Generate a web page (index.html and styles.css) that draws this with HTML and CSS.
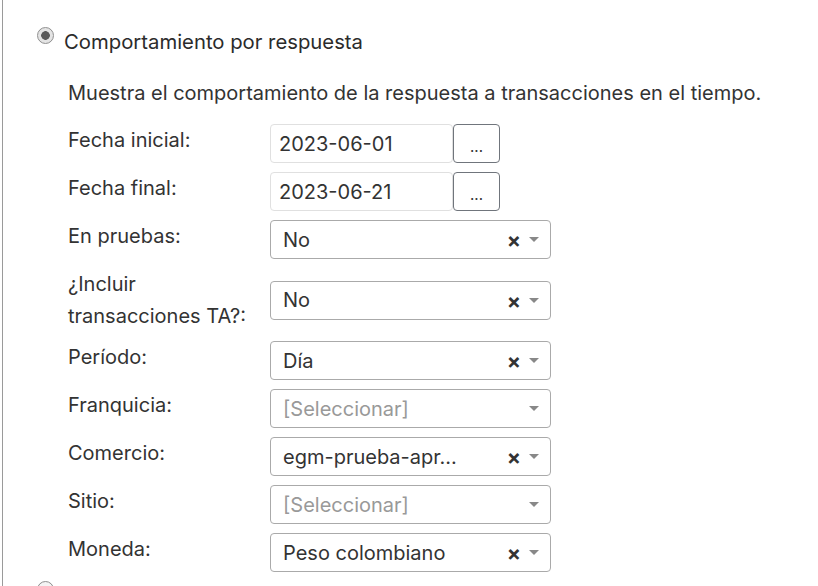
FILE: index.html
```html
<!DOCTYPE html>
<html lang="es">
<head>
<meta charset="utf-8">
<title>Comportamiento por respuesta</title>
<link rel="stylesheet" href="styles.css">
</head>
<body>
<div class="panel">
  <div class="option">
    <span class="radio checked"></span>
    <span class="option-title">Comportamiento por respuesta</span>
  </div>
  <div class="option-body">
    <p class="desc">Muestra el comportamiento de la respuesta a transacciones en el tiempo.</p>
    <div class="form">
      <div class="row">
        <label class="lbl">Fecha inicial:</label>
        <div class="date"><div class="date-input">2023-06-01</div><button class="dots">...</button></div>
      </div>
      <div class="row">
        <label class="lbl">Fecha final:</label>
        <div class="date"><div class="date-input">2023-06-21</div><button class="dots">...</button></div>
      </div>
      <div class="row">
        <label class="lbl">En pruebas:</label>
        <div class="select"><span class="val">No</span><span class="clear">×</span><span class="arrow"></span></div>
      </div>
      <div class="row tall">
        <label class="lbl">¿Incluir<br>transacciones TA?:</label>
        <div class="select"><span class="val">No</span><span class="clear">×</span><span class="arrow"></span></div>
      </div>
      <div class="row">
        <label class="lbl">Período:</label>
        <div class="select"><span class="val">Día</span><span class="clear">×</span><span class="arrow"></span></div>
      </div>
      <div class="row">
        <label class="lbl">Franquicia:</label>
        <div class="select"><span class="val placeholder">[Seleccionar]</span><span class="arrow"></span></div>
      </div>
      <div class="row">
        <label class="lbl">Comercio:</label>
        <div class="select"><span class="val">egm-prueba-apr...</span><span class="clear">×</span><span class="arrow"></span></div>
      </div>
      <div class="row">
        <label class="lbl">Sitio:</label>
        <div class="select"><span class="val placeholder">[Seleccionar]</span><span class="arrow"></span></div>
      </div>
      <div class="row">
        <label class="lbl">Moneda:</label>
        <div class="select"><span class="val">Peso colombiano</span><span class="clear">×</span><span class="arrow"></span></div>
      </div>
    </div>
  </div>
  <div class="option">
    <span class="radio"></span>
  </div>
</div>
</body>
</html>
```

FILE: styles.css
```css
html, body {
  margin: 0;
  padding: 0;
  background: #ffffff;
}

body {
  font-family: Inter, "Noto Sans", sans-serif;
  color: #333333;
  overflow: hidden;
}

.panel {
  margin-left: 2px;
  border-left: 1px solid #9a9a9a;
  min-height: 586px;
  padding: 27px 0 0 34px;
  box-sizing: border-box;
}

.option {
  display: flex;
  align-items: flex-start;
}

.radio {
  width: 17px;
  height: 17px;
  border-radius: 50%;
  box-sizing: border-box;
  border: 1.5px solid #8f8f8f;
  background: #f4f4f4;
  flex: none;
}

.radio.checked {
  background: radial-gradient(circle, #5a5a5a 0 4px, #e4e4e4 4.6px);
}

.option-title {
  margin-left: 10px;
  margin-top: 3px;
  font-size: 20.3px;
  line-height: 24px;
  color: #2b2b2b;
}

.option-body {
  padding-left: 31px;
}

.desc {
  margin: 27px 0 19px 0;
  font-size: 20px;
  line-height: 24px;
}

.form {
  display: flex;
  flex-direction: column;
}

.row {
  display: flex;
  align-items: flex-start;
  margin-bottom: 9px;
}

.row.tall {
  align-items: center;
}

.lbl {
  width: 202px;
  flex: none;
  font-size: 20px;
  line-height: 32px;
}

.date {
  display: flex;
}

.date-input {
  width: 183px;
  height: 39px;
  box-sizing: border-box;
  border: 1px solid #e0e0e0;
  border-radius: 4px;
  padding-left: 8px;
  display: flex;
  align-items: center;
  font-size: 20px;
}

.dots {
  width: 47px;
  height: 39px;
  box-sizing: border-box;
  border: 1px solid #70757c;
  border-radius: 4px;
  background: #ffffff;
  color: #333333;
  font-family: Inter, sans-serif;
  font-size: 15px;
  padding: 6px 0 0 0;
}

.select {
  width: 281px;
  height: 39px;
  box-sizing: border-box;
  border: 1px solid #aaaaaa;
  border-radius: 4px;
  padding: 0 11px 0 12px;
  display: flex;
  align-items: center;
}

.val {
  flex: 1;
  font-size: 20px;
  white-space: nowrap;
}

.val.placeholder {
  color: #999999;
}

.clear {
  font-size: 21px;
  font-weight: 700;
  color: #333333;
  margin-right: 8px;
  line-height: 1;
  margin-top: 2px;
}

.arrow {
  width: 0;
  height: 0;
  border-left: 5px solid transparent;
  border-right: 5px solid transparent;
  border-top: 5px solid #888888;
}
```
